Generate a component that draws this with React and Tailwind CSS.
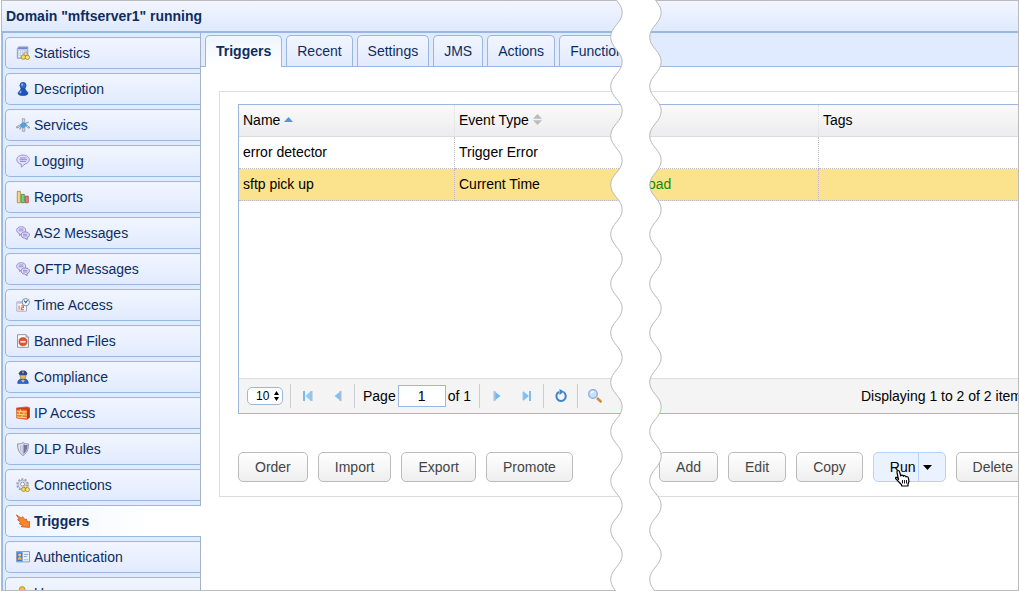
import React, { useState } from 'react';

const Bubble = () => (
  <>
    <path d="M8 1.2C3.900 1.200 1 3.300 1 6.500c0 3 2.600 4.900 5 5.300L6 15l4.200-3.400C13 10.800 15.200 9 15.200 6.500 15.200 3.300 12 1.200 8 1.200z" fill="#e4defa" stroke="#8f86c4" />
    <path d="M4.500 4.500h7.500M4 6.500h8.500M4.500 8.500h7" stroke="#8a7fd0" />
  </>
);

const Bubbles = () => (
  <>
    <path d="M6 .8C3 .8.800 2.400.800 4.800c0 2 1.400 3.300 3 3.700L4 11l2.800-2.300C9.500 8.500 11 7 11 4.800 11 2.400 9 .8 6 .8z" fill="#e4defa" stroke="#8f86c4" />
    <path d="M3 3.500h5.500M3 5.500h5.500" stroke="#8a7fd0" />
    <path d="M10.500 6.800c-2.800 0-4.700 1.400-4.700 3.500s1.800 3.400 4 3.500l3 1.700-.2-2.200c1.600-.5 2.700-1.600 2.700-3.200 0-2.100-2-3.300-4.800-3.300z" fill="#e4defa" stroke="#8177b8" />
    <path d="M8 9.500h5M8 11.400h5" stroke="#8a7fd0" />
  </>
);

const ICONS = {
  statistics: (
    <>
      <path d="M1.500 3L3 1h10.500v11L12 14H1.500z" fill="#c3cce4" stroke="#8d97bd" />
      <path d="M2 3.500h10.500L13.500 1.500H3z" fill="#6f88c8" />
      <path d="M3 6h7M3 8h5M3 10h5M3 12h4" stroke="#fff" strokeDasharray="1.500 1" />
      <circle cx="11" cy="9.300" r="1.900" fill="#e4dfca" stroke="#8c8468" strokeWidth=".6" />
      <circle cx="8.500" cy="12.700" r="2.600" fill="#f6dc4e" stroke="#8f7b2e" strokeWidth=".8" />
      <circle cx="13" cy="13" r="2.500" fill="#f8e36e" stroke="#8f7b2e" strokeWidth=".8" />
    </>
  ),
  description: (
    <>
      <path d="M6 6.500h4l1 2.500 2.800 3.500c0 2-2.600 3-5.800 3s-5.800-1-5.800-3L5 9z" fill="#1f55b8" stroke="#123a8c" strokeWidth=".6" />
      <circle cx="8" cy="4" r="3.600" fill="#2d69d0" stroke="#143f94" strokeWidth=".6" />
      <path d="M5.800 10L4.500 13" stroke="#7db2f4" strokeWidth="1.600" />
      <circle cx="7" cy="3" r="1.200" fill="#8cbcf5" />
    </>
  ),
  services: (
    <>
      <path d="M7.200.8h2.800v14.400H7.200z" fill="#d4d9e2" stroke="#8b95a6" strokeWidth=".8" />
      <path d="M.5 11l6.500-3.500h3l5.500 4" fill="none" stroke="#7f8b9e" strokeWidth="2.200" />
      <path d="M1.500 10.300l5.500-2.800h3l4.500 3.300" fill="none" stroke="#e3e8ef" strokeWidth=".9" />
      <path d="M10 6.500l4.500-2M7 9l-3 4" stroke="#8996a8" strokeWidth="1.200" />
      <path d="M8.500 5L12 8l-3.500 3.400L5 8z" fill="#43a8ef" stroke="#347fbd" strokeWidth=".6" />
    </>
  ),
  logging: <Bubble />,
  reports: (
    <>
      <path d="M1.500 1.500h3.500v13H1.500z" fill="#fbd681" stroke="#b08a4a" />
      <path d="M6 5h3.500v9.500H6z" fill="#67dd78" stroke="#4b8d55" />
      <path d="M10.500 7H14v7.500h-3.500z" fill="#f28070" stroke="#a3524b" />
    </>
  ),
  messages: <Bubbles />,
  time: (
    <>
      <path d="M1 4.500h11V15H1z" fill="#fff" stroke="#9a9fc0" />
      <path d="M1.500 4.500H9v2H1.500z" fill="#b9bfdc" />
      <path d="M3.500 8.500v5M6 9h2.500v2.200H6v2.300h3" fill="none" stroke="#e0603c" strokeWidth="1.200" />
      <circle cx="11.200" cy="4.800" r="4.200" fill="#e9f7fc" stroke="#718599" />
      <path d="M9.300 3l1.900 2.200 2-2.700" fill="none" stroke="#315b88" strokeWidth="1.200" />
    </>
  ),
  banned: (
    <>
      <path d="M1.800.8h9.700l2.700 2.700v11.700H1.800z" fill="#fff" stroke="#818796" />
      <path d="M11.500.8v2.700h2.700" fill="#dfe3ed" stroke="#818796" />
      <circle cx="8" cy="8.800" r="4.700" fill="#e7502c" stroke="#b93a20" strokeWidth=".6" />
      <path d="M5 7.900h6v2H5z" fill="#ffe9e2" />
    </>
  ),
  compliance: (
    <>
      <path d="M2 15.300c0-3.500 1.500-5.300 6-5.300s6 1.800 6 5.300z" fill="#2e67cf" stroke="#173f94" strokeWidth=".7" />
      <circle cx="8" cy="7.200" r="3.400" fill="#edb377" stroke="#96612e" strokeWidth=".6" />
      <path d="M3.200 3.800C4 1 6 .5 8 .5s4.200.5 4.800 3.300L12.200 6H4z" fill="#2d4891" />
      <path d="M8 1.800v2M6.500 11.500l1.500 1.800 1.500-1.800" fill="none" stroke="#ffd35b" strokeWidth="1.400" />
    </>
  ),
  ip: (
    <>
      <path d="M.6 2.200L12.500 1l3 1V13l-3 2.300L.8 13.800z" fill="#ef7a30" stroke="#c0461f" strokeWidth=".7" />
      <path d="M.8 2.500l11.700-1 3 .7-3 2L.8 4z" fill="#d63a1e" />
      <path d="M12.500 4l3-1.500V13l-3 2z" fill="#b83c1b" />
      <path d="M1 6l11.500.9M1 9.500l11.500.8M1 12.500l11.500.9M5 4v2M9 7v3M4 6.500v3M7 10.500v2.500" stroke="#ffd878" strokeWidth="1.200" />
    </>
  ),
  dlp: (
    <>
      <path d="M1.800 2.200C4 2.200 6 2 8 .8c2 1.200 4 1.400 6.200 1.400 0 6.500-1.700 10.500-6.200 13.300C3.500 12.700 1.800 8.500 1.800 2.200z" fill="#e6e6f2" stroke="#85859f" />
      <path d="M8.500 2.500c1.500.7 3 1 4.700 1-.2 5-1.700 8.300-4.700 10.500z" fill="#7375a3" />
      <path d="M5 4v7M7 3.500v10" stroke="#b3b3d0" />
    </>
  ),
  connections: (
    <>
      <circle cx="7.500" cy="7.500" r="6.100" stroke="#9aa0b8" strokeWidth="2.200" strokeDasharray="2.200 1.600" />
      <circle cx="7.500" cy="7.500" r="5" fill="#dfe2ee" stroke="#a2a8bf" />
      <circle cx="7.500" cy="7" r="2.200" fill="#fff" stroke="#858ba2" />
      <circle cx="11" cy="9.800" r="1.800" fill="#e4dfca" stroke="#8c8468" strokeWidth=".6" />
      <circle cx="8.700" cy="13" r="2.400" fill="#f6dc4e" stroke="#8f7b2e" strokeWidth=".8" />
      <circle cx="13" cy="13.200" r="2.400" fill="#f8e36e" stroke="#8f7b2e" strokeWidth=".8" />
    </>
  ),
  triggers: (
    <path d="M.5 1L6 4.800 7.500 3l3 3.800L11.500 5.500l1.800 3.700 2.200-.700V15.300L5.800 14.500l2-1.500L3.500 11l1.800-1.500L1.800 6.500l1.700-.7z" fill="#f9872a" stroke="#d9562a" />
  ),
  authentication: (
    <>
      <path d="M.6 1.800h14.800v11.800H.6z" fill="#edf4fb" stroke="#7d91ad" />
      <path d="M1.200 2.500H7.500V13H1.200z" fill="#2f7fd2" />
      <circle cx="4.200" cy="5.600" r="1.700" fill="#f5cb75" />
      <path d="M2 11c0-2.300 1-3.200 2.300-3.200S6.500 8.700 6.500 11z" fill="#f2b24a" />
      <path d="M9 5h5M9 7.500h3.500" stroke="#7e9dbb" />
      <path d="M9 11h5" stroke="#b9cbdc" strokeWidth="1.500" />
    </>
  ),
  users: (
    <>
      <circle cx="7" cy="4" r="3.300" fill="#f5c23c" stroke="#a87c26" strokeWidth=".8" />
      <path d="M1.500 14c0-4 2-6 5.500-6s6 2 6 6z" fill="#e78f34" stroke="#a8652a" />
    </>
  ),
};

const MENU = [
  { icon: "statistics", label: "Statistics" },
  { icon: "description", label: "Description" },
  { icon: "services", label: "Services" },
  { icon: "logging", label: "Logging" },
  { icon: "reports", label: "Reports" },
  { icon: "messages", label: "AS2 Messages" },
  { icon: "messages", label: "OFTP Messages" },
  { icon: "time", label: "Time Access" },
  { icon: "banned", label: "Banned Files" },
  { icon: "compliance", label: "Compliance" },
  { icon: "ip", label: "IP Access" },
  { icon: "dlp", label: "DLP Rules" },
  { icon: "connections", label: "Connections" },
  { icon: "triggers", label: "Triggers" },
  { icon: "authentication", label: "Authentication" },
  { icon: "users", label: "Users" },
];

const TABS = ["Triggers", "Recent", "Settings", "JMS", "Actions", "Functions"];

const ROWS = [
  { name: "error detector", event: "Trigger Error", action: "", tags: "" },
  { name: "sftp pick up", event: "Current Time", action: "Upload", tags: "" },
];

// Tear between the left and right part of the page
const HALF = 24.65;
const wave = (right, left, count) => {
  let y = 12.5 - HALF;
  let d = `M${left} ${y}`;
  for (let i = 0; i < count; i++) {
    const from = i % 2 ? right : left;
    const to = i % 2 ? left : right;
    d += `C${from} ${y + HALF * 0.42} ${to} ${y + HALF * 0.58} ${to} ${y + HALF}`;
    y += HALF;
  }
  return d;
};

function Tear() {
  const a = wave(12.2, 0.7, 101);
  const b = wave(51.2, 39.7, 101);
  return (
    <svg className="pointer-events-none absolute inset-y-0 left-[610px] z-10 h-full w-[54px]" aria-hidden="true">
      <path d={`${a}H32V-13H1Z`} fill="#fff" />
      <path d={`${b}H20V-13H40Z`} fill="#fff" />
      <path d={a} fill="none" stroke="#b9b9b9" />
      <path d={b} fill="none" stroke="#b9b9b9" />
    </svg>
  );
}

function Button({ children }) {
  return (
    <button className="h-[30px] shrink-0 rounded-[5px] border border-[#bbb] bg-linear-to-b from-white to-[#eee] px-4 text-[#444]">
      {children}
    </button>
  );
}

function PagerButton({ label, children }) {
  return (
    <button aria-label={label} className="flex h-6 w-[30px] items-center justify-center">
      <svg width="14" height="14" viewBox="0 0 14 14" fill="none">{children}</svg>
    </button>
  );
}

const Separator = () => <span className="h-6 w-px bg-[#ccc]"></span>;

function Sidebar() {
  const [active, setActive] = useState("Triggers");

  return (
    <nav className="flex w-[199px] shrink-0 flex-col gap-1 border-x border-l-[#9ab7df] border-r-[#a5b1c4] bg-[#e0ebff] pt-1 pl-0.5">
      {MENU.map(item => (
        <button
          key={item.label}
          onClick={() => setActive(item.label)}
          className={`flex h-8 shrink-0 items-center gap-1 rounded-l-[5px] border border-r-0 border-[#9ab7df] pl-2.5 text-left ${
            item.label === active
              ? 'relative -mr-px bg-linear-to-r from-[#eff5ff] to-white to-75% font-bold'
              : 'bg-linear-to-b from-[#f2f5ff] to-[#e1ebfe]'
          }`}
        >
          <svg width="14" height="14" viewBox="0 0 16 16" fill="none">{ICONS[item.icon]}</svg>
          {item.label}
        </button>
      ))}
    </nav>
  );
}

function Tabs() {
  const [active, setActive] = useState("Triggers");

  return (
    <div role="tablist" className="flex gap-1 border-b border-[#9ab7df] bg-[#e0ebff] pt-0.5 pl-1">
      {TABS.map(tab => (
        <button
          key={tab}
          role="tab"
          aria-selected={tab === active}
          onClick={() => setActive(tab)}
          className={`shrink-0 rounded-t-[5px] border border-b-0 border-[#9ab7df] px-2.5 ${
            tab === active
              ? 'relative -mb-px h-8 bg-linear-to-b from-[#eff5ff] to-white pb-px font-bold'
              : 'h-[31px] bg-linear-to-b from-[#f2f5ff] to-[#e1ebfe]'
          }`}
        >
          {tab}
        </button>
      ))}
    </div>
  );
}

function Grid() {
  const [pageSize, setPageSize] = useState("10");
  const [page, setPage] = useState("1");

  return (
    <div className="border border-[#9ab7df] text-black">
      <div className="min-h-[273px]">
        <table className="w-full table-fixed border-separate border-spacing-0 text-left">
          <colgroup>
            <col className="w-[216px]" />
            <col className="w-[168px]" />
            <col className="w-[196px]" />
            <col />
          </colgroup>
          <thead>
            <tr className="h-8 bg-linear-to-b from-[#fafafa] to-[#ececee] *:border-b *:border-[#ddd] *:px-1 *:pb-0.5 *:font-normal">
              <th className="border-r border-r-[#ccc] [border-right-style:dotted]">
                <span className="flex items-center gap-1">
                  Name
                  <svg width="9" height="5" viewBox="0 0 9 5"><path d="M0 5L4.500 0 9 5z" fill="#5b93d6" /></svg>
                </span>
              </th>
              <th className="border-r border-r-[#ccc] [border-right-style:dotted]">
                <span className="flex items-center gap-1">
                  Event Type
                  <svg width="9" height="11" viewBox="0 0 9 11"><path d="M0 4.700L4.500 0 9 4.700zM0 6.300h9L4.500 11z" fill="#bbb" /></svg>
                </span>
              </th>
              <th className="border-r border-r-[#ccc] [border-right-style:dotted]"></th>
              <th>Tags</th>
            </tr>
          </thead>
          <tbody>
            {ROWS.map(row => (
              <tr
                key={row.name}
                className={`h-8 *:border-b *:border-dotted *:border-[#bbb] *:px-1 *:pb-0.5 ${row.action ? 'bg-[#fbe28d]' : ''}`}
              >
                <td className="border-r">{row.name}</td>
                <td className="border-r">{row.event}</td>
                <td className="border-r text-[#138a00]">{row.action}</td>
                <td>{row.tags}</td>
              </tr>
            ))}
          </tbody>
        </table>
      </div>

      <div className="flex h-[35px] items-center border-t border-[#ddd] bg-[#f4f4f4] pl-2">
        <div className="relative mr-[7px] flex">
          <select
            aria-label="Rows per page"
            value={pageSize}
            onChange={e => setPageSize(e.target.value)}
            className="h-[18px] w-9 appearance-none rounded-[5px] border border-[#9ab7df] bg-white pl-2 text-xs leading-4"
          >
            <option>10</option>
            <option>20</option>
            <option>50</option>
          </select>
          <svg width="5" height="10" viewBox="0 0 5 10" className="pointer-events-none absolute top-1 right-1">
            <path d="M0 4l2.500-4L5 4zM0 6h5L2.500 10z" fill="#000" />
          </svg>
        </div>
        <Separator />
        <div className="flex pr-px pl-0.5">
          <PagerButton label="First page">
            <path d="M3 2v10" stroke="#79b8ea" strokeWidth="2" />
            <path d="M10 2v10L4.500 7z" fill="#8ccaf7" />
            <path d="M10.500 2v10" stroke="#a9bdd3" strokeWidth="2" />
          </PagerButton>
          <PagerButton label="Previous page">
            <path d="M10 2v10L3.500 7z" fill="#7dc0f5" />
            <path d="M9.500 2v10" stroke="#a9bdd3" strokeWidth="2" />
          </PagerButton>
        </div>
        <Separator />
        <label className="flex items-center gap-0.5 pl-2">
          Page
          <input
            value={page}
            onChange={e => setPage(e.target.value)}
            className="h-[22px] w-12 border border-[#9ab7df] bg-white text-center"
          />
        </label>
        <span className="pr-2 pl-0.5">of 1</span>
        <Separator />
        <div className="flex pr-px pl-0.5">
          <PagerButton label="Next page">
            <path d="M4 2v10l6.500-5z" fill="#6db8f2" />
            <path d="M4.500 2v10" stroke="#a9c4de" strokeWidth="2" />
          </PagerButton>
          <PagerButton label="Last page">
            <path d="M3 2v10l6-5z" fill="#7dc0f5" />
            <path d="M3 3v8" stroke="#b0c3d6" />
            <path d="M10 2v10" stroke="#84bbe8" strokeWidth="2" />
          </PagerButton>
        </div>
        <Separator />
        <div className="pr-px pl-0.5">
          <PagerButton label="Refresh">
            <path d="M9.500 3.200A4.700 4.700 0 1 1 5 3" stroke="#3d86c6" strokeWidth="2" />
            <path d="M5.500 0v6L10 2.500z" fill="#3d86c6" />
          </PagerButton>
        </div>
        <Separator />
        <div className="pl-0.5">
          <PagerButton label="Search">
            <path d="M9 9l4.500 4.200" stroke="#d98a30" strokeWidth="2.600" />
            <circle cx="5" cy="5" r="4.300" fill="#c4e0fb" stroke="#8ca9dd" strokeWidth="1.300" />
            <path d="M3 4.500C3.500 3 4.500 2.500 6 2.700" stroke="#fff" strokeWidth="1.300" />
          </PagerButton>
        </div>
        <span className="ml-auto pr-4">Displaying 1 to 2 of 2 items</span>
      </div>
    </div>
  );
}

function Toolbar() {
  return (
    <div className="mt-[38px] flex gap-2.5 pr-4">
      <Button>Order</Button>
      <Button>Import</Button>
      <Button>Export</Button>
      <Button>Promote</Button>
      <div className="ml-auto flex gap-2.5">
        <Button>Add</Button>
        <Button>Edit</Button>
        <Button>Copy</Button>
        <div className="relative flex h-[30px] rounded-[5px] border border-[#b7d2ff] bg-[#eaf2ff] text-black">
          <button className="pr-0.5 pl-4">Run</button>
          <button aria-label="More run options" className="flex w-[27px] items-center border-l border-[#b7d2ff] pl-1">
            <svg width="9" height="5" viewBox="0 0 9 5"><path d="M0 0h9L4.500 5z" fill="#000" /></svg>
          </button>
          <svg width="17" height="18" viewBox="0 0 17 18" className="pointer-events-none absolute top-4 left-5">
            <path
              d="M4.500 10.500L3 3.500C2.700 1.200 5 .8 5.500 2.800L6.800 7c.5-1.200 2.300-1 2.700.3.600-1 2.200-.7 2.500.6.700-.7 2.200-.2 2.400 1l.6 3.300-1 2.800v2H7.800l-.5-1.500-3.800-4C2.800 10.500 1.500 10 1.500 9c.3-1.300 2-.8 3 .8z"
              fill="#fff"
              stroke="#000"
              strokeWidth="1.200"
              strokeLinejoin="round"
            />
            <path d="M8.500 11v3.500M10.500 11v3.500M12.500 11v3.500" stroke="#000" strokeWidth=".9" />
          </svg>
        </div>
        <Button>Delete</Button>
      </div>
    </div>
  );
}

export default function App() {
  return (
    <div className="relative flex h-screen flex-col overflow-hidden bg-white pl-px font-['Liberation_Sans',Arial,sans-serif] text-sm text-[#0e2d5f]">
      <div className="flex min-h-0 flex-1 flex-col overflow-hidden border border-[#bbb]">
        <h1 className="flex h-8 shrink-0 items-center border-b-2 border-[#9ab7df] bg-linear-to-b from-[#f2f5ff] to-[#dfeafe] pl-1 font-bold">
          Domain "mftserver1" running
        </h1>
        <div className="flex min-h-0 flex-1">
          <Sidebar />
          <main className="min-w-0 flex-1 overflow-hidden">
            <Tabs />
            <section className="mt-6 ml-[18px] min-w-[846px] border border-[#ddd] px-[18px] pt-3 pb-3.5">
              <Grid />
              <Toolbar />
            </section>
          </main>
        </div>
      </div>
      <Tear />
    </div>
  );
}
